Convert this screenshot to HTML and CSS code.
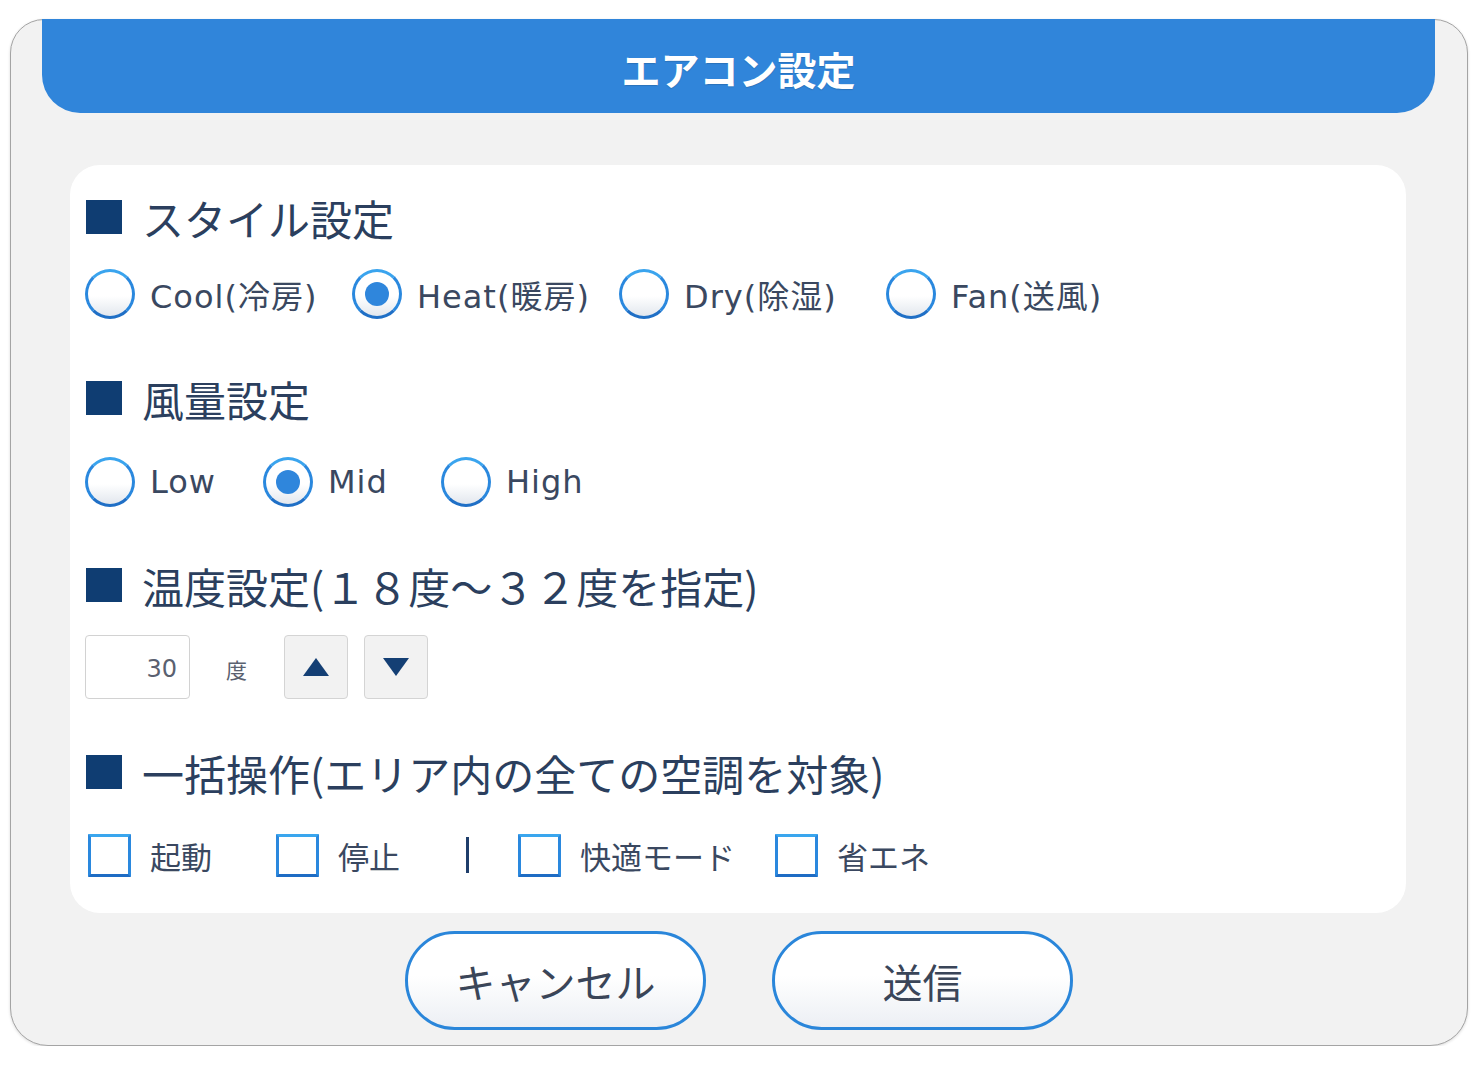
FILE: index.html
```html
<!DOCTYPE html>
<html lang="ja">
<head>
  <meta charset="UTF-8" />
  <title>エアコン設定</title>
  <link rel="stylesheet" href="styles.css">
</head>
<body>

  <div class="dialog">
    <!-- Title bar -->
    <header class="dialog-head">エアコン設定</header>

    <div class="panel">
      <section class="group group-style">
        <h2 class="group-title">スタイル設定</h2>
        <div class="choices choices-4">
          <label class="choice"><span class="radio"></span>Cool(冷房)</label>
          <label class="choice"><span class="radio checked"></span>Heat(暖房)</label>
          <label class="choice"><span class="radio"></span>Dry(除湿)</label>
          <label class="choice"><span class="radio"></span>Fan(送風)</label>
        </div>
      </section>

      <section class="group group-fan">
        <h2 class="group-title">風量設定</h2>
        <div class="choices choices-3">
          <label class="choice"><span class="radio"></span>Low</label>
          <label class="choice"><span class="radio checked"></span>Mid</label>
          <label class="choice"><span class="radio"></span>High</label>
        </div>
      </section>

      <section class="group group-temp">
        <h2 class="group-title">温度設定(１８度〜３２度を指定)</h2>
        <div class="temp-row">
          <div class="temp-input">30</div>
          <span class="temp-unit">度</span>
          <button class="step-btn"><span class="tri tri-up"></span></button>
          <button class="step-btn"><span class="tri tri-down"></span></button>
        </div>
      </section>

      <section class="group group-bulk">
        <h2 class="group-title">一括操作(エリア内の全ての空調を対象)</h2>
        <div class="checks">
          <label class="check check-start"><span class="box"></span>起動</label>
          <label class="check check-stop"><span class="box"></span>停止</label>
          <span class="sep"></span>
          <label class="check check-comfort"><span class="box"></span>快適モード</label>
          <label class="check"><span class="box"></span>省エネ</label>
        </div>
      </section>
    </div>

    <div class="actions">
      <button class="pill-btn">キャンセル</button>
      <button class="pill-btn">送信</button>
    </div>
  </div>

</body>
</html>
```

FILE: styles.css
```css
body {
  margin: 0;
  padding: 0;
  background: #fff;
  font-family: "DejaVu Sans", "Noto Sans CJK JP", sans-serif;
  color: #3a4860;
}

/* Outer dialog */
.dialog {
  box-sizing: border-box;
  width: 1458px;
  height: 1027px;
  margin: 19px 0 0 10px;
  background: #f2f2f2;
  border: 1px solid #a4a4a4;
  border-radius: 34px 34px 38px 38px;
  box-shadow: 0 1px 3px rgba(0, 0, 0, 0.15);
}

.dialog-head {
  height: 94px;
  margin: -1px 32px 0 31px;
  box-sizing: border-box;
  padding-top: 4px;
  background: #3085da;
  border-radius: 0 0 38px 38px;
  color: #fff;
  font-family: "Noto Sans CJK JP", sans-serif;
  font-weight: 700;
  font-size: 39px;
  line-height: 90px;
  text-align: center;
  text-shadow: 0 1px 1px rgba(0, 0, 0, 0.15);
}

/* White content panel */
.panel {
  box-sizing: border-box;
  height: 748px;
  margin: 52px 61px 0 59px;
  padding: 27px 16px 0 15px;
  background: #fff;
  border-radius: 30px;
}

.group-title {
  display: flex;
  align-items: center;
  height: 50px;
  margin: 0 0 0 1px;
  font-family: "Noto Sans CJK JP", sans-serif;
  font-weight: 400;
  font-size: 42px;
  color: #2b3f5e;
  white-space: nowrap;
}

.group-title::before {
  content: "";
  width: 36px;
  height: 34px;
  margin-right: 20px;
  background: #0f3d72;
  flex: none;
}

.group-fan { margin-top: 54px; }
.group-temp { margin-top: 53px; }
.group-bulk { margin-top: 48px; }

/* Radio rows */
.choices {
  display: grid;
  height: 50px;
}

.choices-4 {
  grid-template-columns: repeat(4, 267px);
  margin-top: 27px;
}

.choices-3 {
  grid-template-columns: repeat(3, 178px);
  margin-top: 34px;
}

.choice {
  display: flex;
  align-items: center;
  gap: 15px;
  font-size: 32px;
  letter-spacing: 1px;
  color: #3a4860;
  white-space: nowrap;
}

.radio {
  position: relative;
  box-sizing: border-box;
  width: 50px;
  height: 50px;
  flex: none;
  border: 3px solid;
  border-color: #3aa4ee #2a88de #1f6fc6 #2a88de;
  border-radius: 50%;
  background: linear-gradient(180deg, #fff 55%, #e2e7ee 100%);
}

.radio.checked::after {
  content: "";
  position: absolute;
  left: 10px;
  top: 10px;
  width: 24px;
  height: 24px;
  border-radius: 50%;
  background: #2f86dc;
}

/* Temperature row */
.temp-row {
  display: flex;
  align-items: center;
  height: 64px;
  margin-top: 25px;
}

.temp-input {
  box-sizing: border-box;
  width: 105px;
  height: 64px;
  padding: 4px 12px 0 0;
  border: 1px solid #d2d2d2;
  border-radius: 4px;
  background: #fff;
  font-size: 24px;
  line-height: 58px;
  text-align: right;
  color: #5a6170;
}

.temp-unit {
  margin: 0 37px 0 36px;
  padding-top: 4px;
  font-family: "Noto Sans CJK JP", sans-serif;
  font-size: 21px;
  color: #5a6170;
}

.step-btn {
  display: flex;
  align-items: center;
  justify-content: center;
  box-sizing: border-box;
  width: 64px;
  height: 64px;
  margin-right: 16px;
  padding: 0;
  border: 1px solid #d4d4d4;
  border-radius: 4px;
  background: #f2f2f2;
}

.tri {
  width: 0;
  height: 0;
  border-left: 13px solid transparent;
  border-right: 13px solid transparent;
}

.tri-up { border-bottom: 18px solid #143f74; }
.tri-down { border-top: 18px solid #143f74; }

/* Bulk checkboxes */
.checks {
  display: flex;
  align-items: center;
  height: 50px;
  margin-top: 33px;
  padding-left: 3px;
}

.check {
  display: flex;
  align-items: center;
  gap: 19px;
  font-family: "Noto Sans CJK JP", sans-serif;
  font-size: 31px;
  color: #3a4860;
  white-space: nowrap;
  margin-right: 40px;
}

.check-start { margin-right: 64px; }
.check-stop { margin-right: 66px; }

.box {
  box-sizing: border-box;
  width: 43px;
  height: 43px;
  border: 3px solid;
  border-color: #3aa6ee #2a88de #1e6cc4 #2a88de;
  border-radius: 1px;
  background: #fff;
}

.sep {
  width: 3px;
  height: 36px;
  margin-right: 49px;
  background: #1f3e6b;
}

/* Bottom buttons */
.actions {
  display: flex;
  justify-content: center;
  gap: 66px;
  margin-top: 18px;
}

.pill-btn {
  box-sizing: border-box;
  width: 301px;
  height: 99px;
  border: 3px solid #2a86da;
  border-radius: 50px;
  background: linear-gradient(180deg, #fff 45%, #eceff4 100%);
  font-family: "Noto Sans CJK JP", sans-serif;
  font-size: 40px;
  color: #3a4558;
}
```
